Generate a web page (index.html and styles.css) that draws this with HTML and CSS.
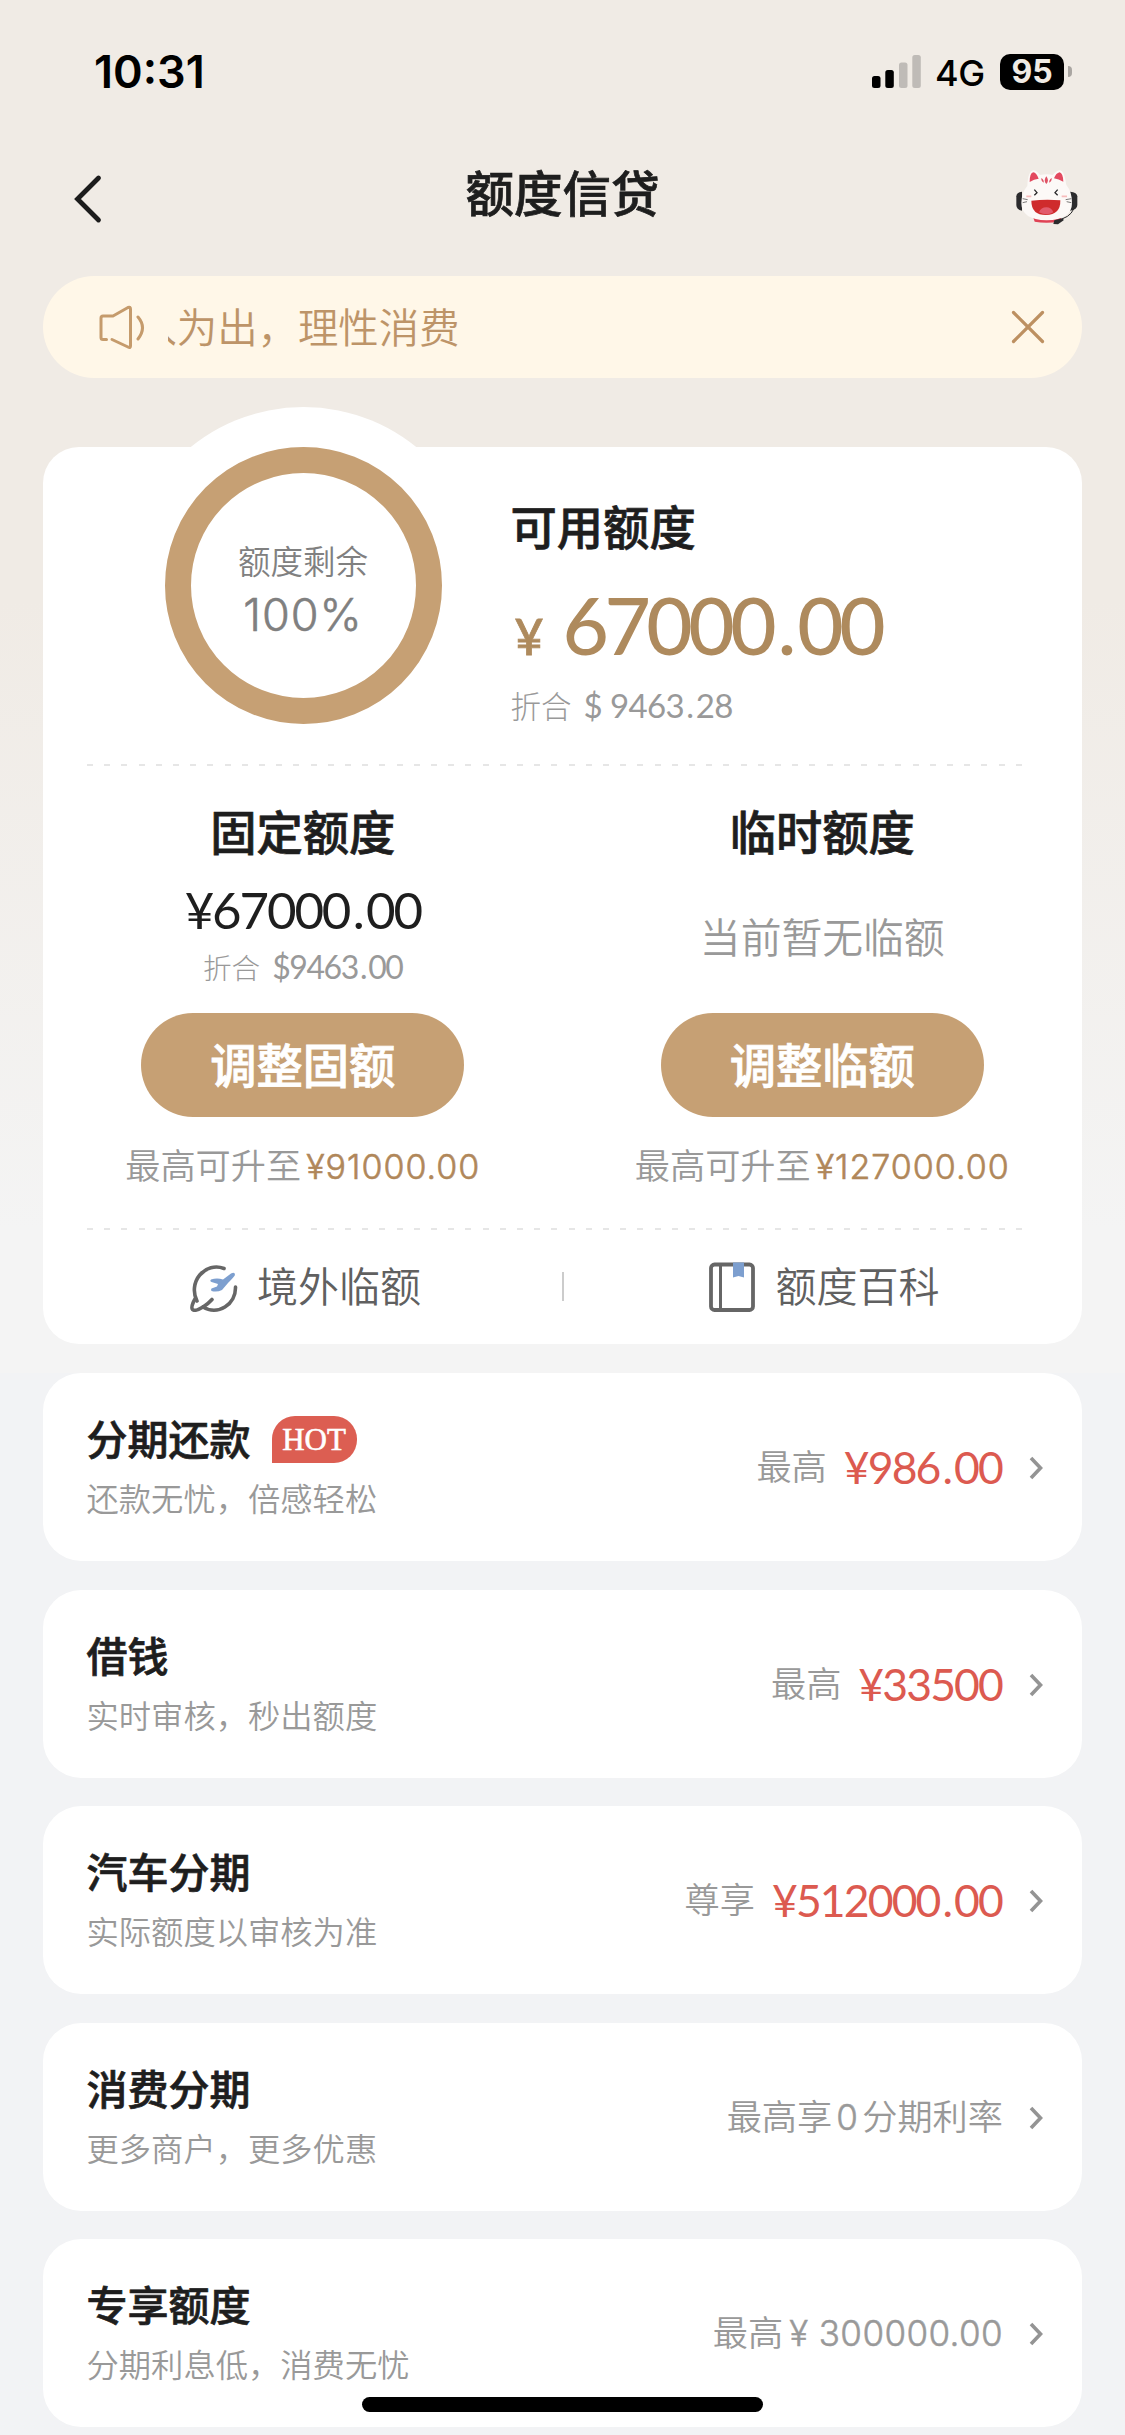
FILE: index.html
```html
<!DOCTYPE html>
<html lang="zh-CN">
<head>
<meta charset="utf-8">
<title>额度信贷</title>
<link rel="stylesheet" href="styles.css">
</head>
<body>
<div class="page">
  <div class="status">
    <span class="time">10:31</span>
    <div class="status-right">
      <svg class="signal" width="49" height="33" viewBox="0 0 49 33">
        <rect x="0" y="21" width="8.5" height="12" rx="2.5" fill="#000"/>
        <rect x="13.3" y="15" width="8.5" height="18" rx="2.5" fill="#000"/>
        <rect x="27" y="7.5" width="8.5" height="25.5" rx="2.5" fill="#bfbbb7"/>
        <rect x="40.3" y="0" width="8.5" height="33" rx="2.5" fill="#bfbbb7"/>
      </svg>
      <span class="net">4G</span>
      <span class="battery">95</span>
      <span class="nub"></span>
    </div>
  </div>

  <header class="nav">
    <svg class="back" width="32" height="52" viewBox="0 0 32 52"><path d="M27.500 5 6.500 26 27.500 47" fill="none" stroke="#1c1c1c" stroke-width="4.800" stroke-linecap="round" stroke-linejoin="miter"/></svg>
    <h1>额度信贷</h1>
    <svg class="cat" width="62" height="56" viewBox="110 86 186 168">
      <path d="M128 154q-17 2-17 14v26q0 14 17 17z" fill="#2b2b2d"/>
      <path d="M272 154q22 2 22 14v26q0 14-22 17z" fill="#2b2b2d"/>
      <path d="M162 232h84l-6 12q-40 6-74 0z" fill="#e04255"/>
      <path d="M144 136Q146 92 162 90q10 0 20 14 22-4 38 0 12-14 23-14 12 2 18 44 17 20 17 54 0 50-76 52-76-2-76-52 0-30 18-52z" fill="#fcf9f7"/>
      <path d="M151 125q0-27 11-29 9 1 16 19-14 1-27 10zM224 114q6-16 17-18 10 3 11 28-14-8-28-10z" fill="#e3495f"/>
      <path d="M201 108q10 13 0 23-10-10 0-23zM186 113q9 6 7 14-8-4-7-14zM217 113q-9 6-7 14 8-4 7-14z" fill="#df5265"/>
      <path d="M165 148l8 9-8 8M235 148l-8 9 8 8" fill="none" stroke="#29292b" stroke-width="4"/>
      <path d="M141 168h15M247 168h16" stroke="#f7bcbc" stroke-width="5"/>
      <path d="M130 175l15 3M130 187l13-3M276 175l-17 3M276 187l-14-3" stroke="#3a3a3a" stroke-width="2"/>
      <path d="M156 181q44-5 87-1 1 44-43 44-44 0-44-43z" fill="#cf2b2c"/>
      <path d="M179 216q6-15 22-15 15 0 21 15-20 12-43 0z" fill="#e25b6c"/>
      <path d="M288 190q-6 34-38 45" fill="none" stroke="#2b2b2d" stroke-width="3"/>
      <path d="M251 233l-26 7-3 11 14 1 17-12z" fill="#2b2b2d"/>
    </svg>
  </header>

  <div class="notice">
    <svg class="horn" width="48" height="48" viewBox="0 0 48 48" fill="none" stroke="#c59b6c" stroke-width="3" stroke-linecap="round" stroke-linejoin="round">
      <path d="M8.500 36.500H5a2 2 0 0 1-2-2V15a2 2 0 0 1 2-2h10L30 4.500q2.500-1 2.500 1.500v37q0 2.500-2.500 1L14 36.500"/>
      <path d="M40 14q9 10.500 0 22"/>
    </svg>
    <div class="ticker"><span>量入为出，理性消费</span></div>
    <svg class="close" width="40" height="40" viewBox="0 0 40 40"><path d="M5.500 5.500l29 29M34.500 5.500l-29 29" stroke="#bd9061" stroke-width="3.200" stroke-linecap="round"/></svg>
  </div>

  <main class="quota">
    <section class="top">
      <div class="ring">
        <span class="ring-label">额度剩余</span>
        <span class="ring-value">100%</span>
      </div>
      <div class="info">
        <h2>可用额度</h2>
        <p class="total"><span class="yen">¥</span><span class="num">67000<i>.</i>00</span></p>
        <p class="usd"><span>折合</span><span class="num">$ 9463<i>.</i>28</span></p>
      </div>
    </section>
    <div class="dash"></div>
    <section class="split">
      <div class="col">
        <h2>固定额度</h2>
        <p class="fixed"><span class="num">¥67000<i>.</i>00</span></p>
        <p class="usd small"><span>折合</span><span class="num">$9463<i>.</i>00</span></p>
        <a class="btn">调整固额</a>
        <p class="max">最高可升至<b>¥91000.00</b></p>
      </div>
      <div class="col">
        <h2>临时额度</h2>
        <p class="none">当前暂无临额</p>
        <a class="btn">调整临额</a>
        <p class="max">最高可升至<b>¥127000.00</b></p>
      </div>
    </section>
    <div class="dash"></div>
    <section class="links">
      <div class="link">
        <svg width="50" height="50" viewBox="0 0 50 50" fill="none">
          <path d="M35 6.500A22 23 0 0 0 8 39M46.500 25A21.500 22.500 0 0 1 14 45" stroke="#666" stroke-width="3.600" stroke-linecap="round"/>
          <path d="M6 37Q1.500 45 3.500 47.500 6 50 14 45 19 42 23 37.500" stroke="#666" stroke-width="3.600" stroke-linecap="round"/>
          <path d="M22 17.500q6-2 12 0L42 11.500q4-2 4 1.500-1 2-7 8L33 28q-5 2.500-10.500 1-1-1.500 0-2.500l5.500-2L29 22l-6.500-2q-2-1-.5-2.500z" fill="#7d9fcf"/>
        </svg>
        <span>境外临额</span>
      </div>
      <div class="link second">
        <svg width="46" height="50" viewBox="0 0 46 50" fill="none">
          <rect x="2" y="2.500" width="42" height="45.500" rx="3.500" stroke="#666" stroke-width="3.800"/>
          <path d="M11.500 3v44" stroke="#666" stroke-width="3"/>
          <path d="M24 .500h11v15l-5.500-1.500L24 15.500z" fill="#7d9fcf"/>
        </svg>
        <span>额度百科</span>
      </div>
    </section>
  </main>

  <div class="list">
    <div class="item">
      <div class="left"><h3>分期还款<em>HOT</em></h3><p>还款无忧，倍感轻松</p></div>
      <div class="right"><span class="tag">最高</span><span class="num">¥986<i>.</i>00</span><svg width="16" height="26" viewBox="0 0 16 26"><path d="M3 3l9.500 10L3 23"/></svg></div>
    </div>
    <div class="item">
      <div class="left"><h3>借钱</h3><p>实时审核，秒出额度</p></div>
      <div class="right"><span class="tag">最高</span><span class="num">¥33500</span><svg width="16" height="26" viewBox="0 0 16 26"><path d="M3 3l9.500 10L3 23"/></svg></div>
    </div>
    <div class="item">
      <div class="left"><h3>汽车分期</h3><p>实际额度以审核为准</p></div>
      <div class="right"><span class="tag">尊享</span><span class="num">¥512000<i>.</i>00</span><svg width="16" height="26" viewBox="0 0 16 26"><path d="M3 3l9.500 10L3 23"/></svg></div>
    </div>
    <div class="item">
      <div class="left"><h3>消费分期</h3><p>更多商户，更多优惠</p></div>
      <div class="right"><span class="plain">最高享<b class="zero">0</b>分期利率</span><svg width="16" height="26" viewBox="0 0 16 26"><path d="M3 3l9.500 10L3 23"/></svg></div>
    </div>
    <div class="item">
      <div class="left"><h3>专享额度</h3><p>分期利息低，消费无忧</p></div>
      <div class="right"><span class="plain">最高<b>¥ 300000.00</b></span><svg width="16" height="26" viewBox="0 0 16 26"><path d="M3 3l9.500 10L3 23"/></svg></div>
    </div>
  </div>
  <div class="home"></div>
</div>
</body>
</html>
```
FILE: styles.css
```css
* { box-sizing: border-box; margin: 0; padding: 0; }
body {
  width: 1125px;
  height: 2435px;
  overflow: hidden;
  font-family: "Noto Sans CJK SC", sans-serif;
  font-weight: 350;
  color: #1e1e1e;
  background: linear-gradient(#f0ebe5 0, #f0ebe5 600px, #f4f4f4 1230px, #f4f4f4 1373px, #f2f3f5 1373px);
}
h1, h2, h3 { font-weight: 500; -webkit-text-stroke: .7px currentColor; }
i, em { font-style: normal; }
svg { display: block; flex: none; }
.page { position: relative; height: 2435px; overflow: hidden; }

/* status bar */
.status {
  height: 143px;
  padding: 0 53px 0 94px;
  display: flex;
  align-items: center;
  justify-content: space-between;
  font-family: Inter, sans-serif;
  color: #000;
}
.time { font-size: 45px; font-weight: 600; letter-spacing: 0; }
.status-right { display: flex; align-items: center; }
.net { margin: 3px 0 0 14px; width: 65px; font-size: 36px; font-weight: 500; letter-spacing: -.5px; }
.battery {
  width: 64px;
  height: 36px;
  border-radius: 10px;
  background: #000;
  color: #f0ebe5;
  font-size: 32px;
  font-weight: 700;
  line-height: 36px;
  text-align: center;
}
.nub { width: 4px; height: 11px; margin-left: 4px; border-radius: 0 4px 4px 0; background: #aaa6a2; }

/* navigation */
.nav {
  height: 112px;
  padding: 0 47px 0 71px;
  display: flex;
  align-items: center;
  justify-content: space-between;
}
.nav h1 { margin: 0 0 17px 6px; font-size: 48.5px; line-height: 60px; }
.cat { margin-top: -4px; }

/* notice */
.notice {
  height: 102px;
  margin: 21px 43px 0;
  padding: 0 34px 0 54px;
  display: flex;
  align-items: center;
  border-radius: 51px;
  background: #fff7e8;
  color: #bd9468;
}
.horn { margin-left: 1px; }
.ticker {
  width: 830px;
  height: 58px;
  margin: -3px auto 0 22px;
  overflow: hidden;
  display: flex;
  font-size: 40.4px;
  line-height: 58px;
  white-space: nowrap;
}
.ticker span { margin-left: -72px; }

/* quota card */
.quota {
  height: 897px;
  margin: 69px 43px 0;
  border-radius: 36px;
  background: #fff;
}
.top { height: 317px; padding-left: 121.5px; display: flex; align-items: flex-start; }
.ring {
  position: relative;
  width: 277px;
  height: 277px;
  padding-top: 63px;
  border: 26px solid #c6a074;
  border-radius: 50%;
  background: #fff;
  color: #808080;
  text-align: center;
  display: flex;
  flex-direction: column;
}
.ring::before {
  content: "";
  position: absolute;
  inset: -66px;
  z-index: -1;
  border-radius: 50%;
  background: #fff;
}
.ring-label { font-size: 32.5px; line-height: 48px; }
.ring-value { font-family: Inter, sans-serif; font-weight: 350; font-size: 45px; line-height: 60px; margin-top: 1px; letter-spacing: 1px; -webkit-text-stroke: .6px currentColor; }
.info { padding: 49.5px 0 0 69px; }
h2 { font-size: 46.3px; line-height: 56px; }
.num { font-family: Lato, sans-serif; font-weight: 400; letter-spacing: -.048em; white-space: pre; }
.num i { margin: 0 .067em; }
.total { margin-top: 31.5px; height: 80px; line-height: 80px; display: flex; align-items: baseline; color: #ae8a5d; }
.total .yen { font: 500 50px/80px Lato, sans-serif; width: 52px; padding-left: 4px; -webkit-text-stroke: .8px currentColor; }
.total .num { font-size: 80px; font-weight: 500; letter-spacing: -.056em; }
.usd { margin-top: 19px; height: 44px; display: flex; align-items: center; color: #999; line-height: 44px; }
.usd span:first-child { font-size: 30.5px; font-weight: 300; }
.usd .num { font-size: 33px; margin-left: 12px; letter-spacing: -.018em; }
.dash {
  height: 2px;
  margin: 0 53px 0 43.500px;
  background: repeating-linear-gradient(90deg, #e6e6e6 0 6px, transparent 6px 17.200px);
}
.split { display: flex; height: 462px; }
.col { flex: 1; padding-top: 36px; display: flex; flex-direction: column; align-items: center; }
.fixed { margin-top: 24px; height: 50px; font-size: 51px; line-height: 50px; }
.fixed .num { letter-spacing: -.042em; }
.usd.small { margin-top: 15.500px; height: 38px; line-height: 38px; }
.usd.small span:first-child { font-size: 28.600px; }
.usd.small .num { font-size: 32px; margin-left: 12px; letter-spacing: -.045em; }
.btn {
  width: 323px;
  height: 104.500px;
  margin-top: 27px;
  border-radius: 53px;
  background: #c6a074;
  color: #fff;
  font-size: 46.300px;
  font-weight: 500;
  line-height: 99px;
  text-align: center;
  -webkit-text-stroke: .8px currentColor;
}
.none { height: 154.500px; font-size: 40.800px; line-height: 155px; color: #999; }
.none + .btn { margin-top: 0; }
.max { margin-top: 23.500px; height: 46px; font-size: 35.200px; line-height: 46px; color: #999; white-space: nowrap; }
.max b { font: 350 34px/40px Inter, sans-serif; color: #b0875a; margin-left: 5px; letter-spacing: 1px; -webkit-text-stroke: .6px currentColor; }
.links { height: 114px; display: flex; align-items: center; position: relative; }
.links::after { content: ""; position: absolute; left: 519px; top: 42px; width: 2px; height: 29px; background: #ccc; }
.link { flex: 1; display: flex; align-items: center; padding-left: 146px; color: #606060; }
.link span { margin: -7px 0 0 18px; font-size: 41px; line-height: 56px; }
.link.second span { margin-left: 21px; }

/* product list */
.list { margin: 29px 43px 0; display: flex; flex-direction: column; gap: 28.500px; }
.item {
  height: 188px;
  padding: 0 38px 0 43.500px;
  border-radius: 38px;
  background: #fff;
  display: flex;
  justify-content: space-between;
}
.left { padding-top: 39px; }
h3 { height: 50px; font-size: 41px; line-height: 50px; display: flex; }
h3 em {
  width: 85px;
  height: 47px;
  margin: 4px 0 0 21px;
  border-radius: 23px 23px 23px 0;
  background: #dc5e52;
  color: #fff;
  font: 400 31px/48px "Liberation Serif", serif;
  text-align: center;
  -webkit-text-stroke: .6px currentColor;
}
.left p { margin-top: 15px; font-size: 32.300px; line-height: 40px; color: #999; }
.right { display: flex; align-items: center; color: #999; }
.right .tag, .right .plain { margin-top: -4px; font-size: 35.200px; line-height: 48px; }
.right .num { margin-left: 17px; font-size: 44.500px; line-height: 50px; letter-spacing: -.042em; color: #dc5a50; }
.right svg { margin: 2px 0 0 26px; fill: none; stroke: #949494; stroke-width: 3.600; }
.right .plain + svg { margin-left: 25px; }
.plain b { font: 350 35px/40px Inter, sans-serif; letter-spacing: .4px; margin-left: 6px; -webkit-text-stroke: .5px currentColor; }
.plain .zero { margin: 0 4px; }

.home {
  position: absolute;
  left: 362px;
  top: 2397px;
  width: 401px;
  height: 15px;
  border-radius: 8px;
  background: #000;
}
```
